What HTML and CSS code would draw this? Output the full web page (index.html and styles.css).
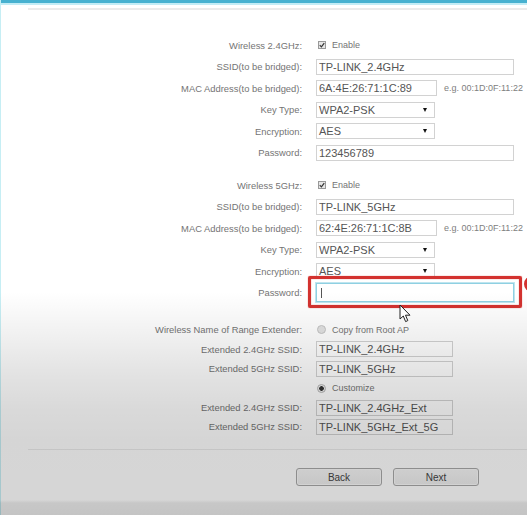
FILE: index.html
```html
<!DOCTYPE html>
<html>
<head>
<meta charset="utf-8">
<link rel="stylesheet" href="styles.css">
</head>
<body>
<div class="page">
  <div class="topbar"></div>
  <div class="content">
    <div class="rule rule-top"></div>

    <section class="grp grp-a">
      <div class="row"><span class="lbl">Wireless 2.4GHz:</span><div class="ctl"><span class="chk"><svg viewBox="0 0 8 8" width="6" height="6"><path d="M1 4.2 L3.2 6.4 L7 1.4" fill="none" stroke="#333" stroke-width="1.6"/></svg></span><span class="opt">Enable</span></div></div>
      <div class="row"><span class="lbl">SSID(to be bridged):</span><div class="ctl"><input class="fld w-long" value="TP-LINK_2.4GHz"></div></div>
      <div class="row"><span class="lbl">MAC Address(to be bridged):</span><div class="ctl"><input class="fld w-mac" value="6A:4E:26:71:1C:89"><span class="hint">e.g. 00:1D:0F:11:22</span></div></div>
      <div class="row"><span class="lbl">Key Type:</span><div class="ctl"><div class="sel w-sel"><span>WPA2-PSK</span><i class="caret"></i></div></div></div>
      <div class="row"><span class="lbl">Encryption:</span><div class="ctl"><div class="sel w-sel"><span>AES</span><i class="caret"></i></div></div></div>
      <div class="row"><span class="lbl">Password:</span><div class="ctl"><input class="fld w-long" value="123456789"></div></div>
    </section>

    <section class="grp grp-b">
      <div class="row"><span class="lbl">Wireless 5GHz:</span><div class="ctl"><span class="chk"><svg viewBox="0 0 8 8" width="6" height="6"><path d="M1 4.2 L3.2 6.4 L7 1.4" fill="none" stroke="#333" stroke-width="1.6"/></svg></span><span class="opt">Enable</span></div></div>
      <div class="row"><span class="lbl">SSID(to be bridged):</span><div class="ctl"><input class="fld w-long" value="TP-LINK_5GHz"></div></div>
      <div class="row"><span class="lbl">MAC Address(to be bridged):</span><div class="ctl"><input class="fld w-mac" value="62:4E:26:71:1C:8B"><span class="hint">e.g. 00:1D:0F:11:22</span></div></div>
      <div class="row"><span class="lbl">Key Type:</span><div class="ctl"><div class="sel w-sel"><span>WPA2-PSK</span><i class="caret"></i></div></div></div>
      <div class="row"><span class="lbl">Encryption:</span><div class="ctl"><div class="sel w-sel"><span>AES</span><i class="caret"></i></div></div></div>
      <div class="row"><span class="lbl">Password:</span><div class="ctl"><span class="focus-wrap"><span class="fld w-long fld-focus"><i class="tcursor"></i></span></span></div></div>
    </section>

    <section class="grp grp-c">
      <div class="row"><span class="lbl">Wireless Name of Range Extender:</span><div class="ctl"><span class="radio"></span><span class="opt">Copy from Root AP</span></div></div>
      <div class="row"><span class="lbl">Extended 2.4GHz SSID:</span><div class="ctl"><input class="fld w-ext" value="TP-LINK_2.4GHz"></div></div>
      <div class="row"><span class="lbl">Extended 5GHz SSID:</span><div class="ctl"><input class="fld w-ext" value="TP-LINK_5GHz"></div></div>
      <div class="row"><span class="lbl"></span><div class="ctl"><span class="radio on"></span><span class="opt">Customize</span></div></div>
      <div class="row"><span class="lbl">Extended 2.4GHz SSID:</span><div class="ctl"><input class="fld w-ext" value="TP-LINK_2.4GHz_Ext"></div></div>
      <div class="row"><span class="lbl">Extended 5GHz SSID:</span><div class="ctl"><input class="fld w-ext" value="TP-LINK_5GHz_Ext_5G"></div></div>
    </section>

    <div class="rule rule-bottom"></div>

    <div class="buttons">
      <button class="btn">Back</button>
      <button class="btn">Next</button>
    </div>
  </div>
</div>
<div class="shade"></div>
<div class="ring"></div>
<svg class="pointer" width="12" height="19" viewBox="0 0 12 19"><path d="M1 1 L1 15 L4.3 12 L6.6 17.6 L8.8 16.6 L6.5 11.2 L11 11.2 Z" fill="#fff" stroke="#222" stroke-width="1" stroke-linejoin="round"/></svg>
</body>
</html>
```

FILE: styles.css
```css
html, body {
  margin: 0;
  padding: 0;
  width: 527px;
  height: 515px;
  overflow: hidden;
  background: #ffffff;
  font-family: "Liberation Sans", Arial, sans-serif;
}

.page {
  position: relative;
  height: 515px;
  border-left: 1px solid #c6eef4;
  box-sizing: border-box;
}

.topbar {
  height: 3px;
  background: #47b1d0;
  border-bottom: 2px solid #c3ecf5;
}

.rule {
  margin-left: 27px;
  background: #ebebeb;
}

.rule-top {
  margin-top: 3px;
  height: 2px;
}

.grp-a { margin-top: 24.5px; }
.grp-b { margin-top: 11px; }
.grp-c { margin-top: 16.8px; }

.grp-a .row, .grp-b .row { height: 21.5px; }
.grp-c .row { height: 19.4px; }

.row {
  display: grid;
  grid-template-columns: 301px 1fr;
  column-gap: 14px;
  align-items: center;
}

.lbl {
  text-align: right;
  font-size: 9.4px;
  color: #747474;
  white-space: nowrap;
}

.ctl {
  display: flex;
  align-items: center;
  white-space: nowrap;
}

.fld {
  box-sizing: border-box;
  height: 16px;
  border: 1px solid #d2d2d2;
  background: #fff;
  padding: 0 0 0 2px;
  margin: 0;
  font-family: "Liberation Sans", Arial, sans-serif;
  font-size: 11px;
  color: #555;
  outline: none;
}

.w-long { width: 198px; }
.w-mac { width: 121px; }
.w-sel { width: 119px; }
.w-ext { width: 137px; }

.hint {
  margin-left: 7px;
  font-size: 9px;
  color: #808080;
}

.sel {
  box-sizing: border-box;
  height: 16px;
  border: 1px solid #d2d2d2;
  background: #fff;
  padding-left: 2px;
  display: flex;
  align-items: center;
  justify-content: space-between;
  font-size: 11px;
  color: #555;
}

.caret {
  width: 0;
  height: 0;
  margin-right: 7px;
  border-left: 2.5px solid transparent;
  border-right: 2.5px solid transparent;
  border-top: 4px solid #111;
}

.chk {
  box-sizing: border-box;
  width: 8px;
  height: 8px;
  margin-left: 2px;
  border: 1px solid #999;
  background: #e6e6e6;
  display: flex;
  align-items: center;
  justify-content: center;
}

.opt {
  margin-left: 6px;
  font-size: 9px;
  color: #747474;
}

.radio {
  box-sizing: border-box;
  width: 9px;
  height: 9px;
  margin-left: 1px;
  border-radius: 50%;
  border: 1px solid #c4c4c4;
  background: #e2e2e2;
}

.radio.on {
  background: radial-gradient(circle, #333 0 2px, #f2f2f2 2.6px);
  border-color: #b5b5b5;
}

.focus-wrap {
  position: relative;
  display: block;
}

.fld-focus {
  display: block;
  height: 19px;
  border: 1px solid #8fd0e2;
  box-shadow: 0 0 0 1px #bfe5ef;
  position: relative;
}

.tcursor {
  position: absolute;
  left: 4px;
  top: 4px;
  width: 1px;
  height: 10px;
  background: #555;
}

.focus-wrap::after {
  content: "";
  position: absolute;
  left: -8px;
  right: -8px;
  top: -7px;
  bottom: -6px;
  border: 3px solid #d3322f;
  border-radius: 2px;
  box-shadow: 0 0 1px #d3322f, inset 0 0 1px #d3322f;
}

.rule-bottom {
  margin-top: 12.3px;
  height: 1.5px;
}

.buttons {
  display: flex;
  gap: 11px;
  margin-top: 18px;
  padding-left: 295px;
}

.btn {
  box-sizing: border-box;
  width: 86px;
  height: 18px;
  margin: 0;
  padding: 0;
  border: 1px solid #a8a8a8;
  border-radius: 3px;
  background: linear-gradient(#f6f6f6, #ededed);
  box-shadow: inset 0 0 0 1px #fafafa;
  font-family: "Liberation Sans", Arial, sans-serif;
  font-size: 10px;
  color: #444;
}

.shade {
  position: absolute;
  left: 0;
  top: 0;
  width: 527px;
  height: 515px;
  pointer-events: none;
  background: linear-gradient(to bottom,
    rgba(0,0,0,0) 0px,
    rgba(0,0,0,0) 292px,
    rgba(0,0,0,0.05) 330px,
    rgba(0,0,0,0.11) 373px,
    rgba(0,0,0,0.15) 410px,
    rgba(0,0,0,0.165) 440px,
    rgba(0,0,0,0.16) 500px,
    rgba(0,0,0,0.22) 503px,
    rgba(0,0,0,0.23) 515px);
}

.ring {
  position: absolute;
  left: 524px;
  top: 276px;
  width: 16px;
  height: 16px;
  box-sizing: border-box;
  border: 3px solid #d3322f;
  border-radius: 50%;
}

.pointer {
  position: absolute;
  left: 399px;
  top: 304px;
}
```
